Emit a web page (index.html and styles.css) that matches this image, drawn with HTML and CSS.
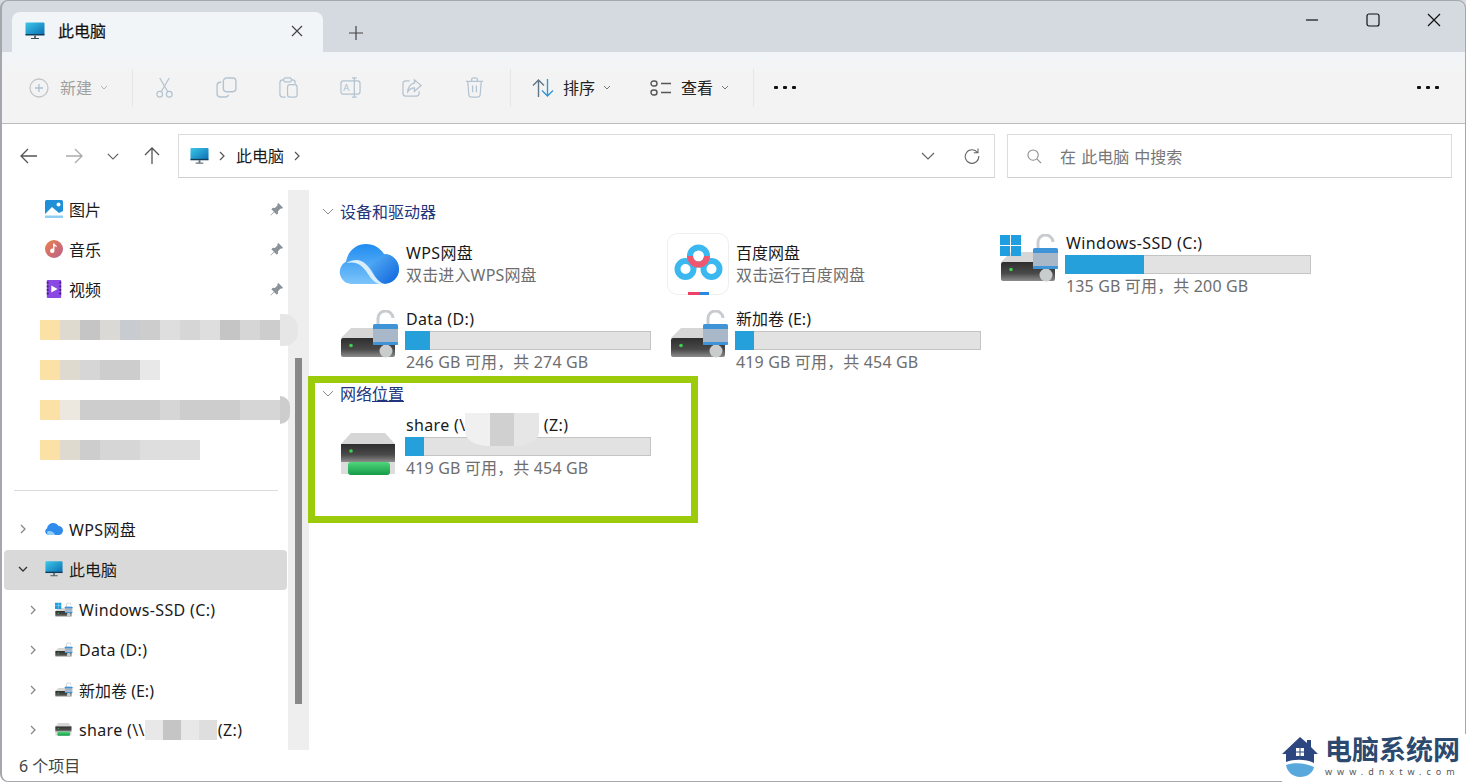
FILE: index.html
```html
<!DOCTYPE html>
<html lang="zh-CN">
<head>
    <meta charset="UTF-8">
    <title>此电脑</title>
    <link rel="stylesheet" href="styles.css">
</head>
<body>
<svg class="sprite" aria-hidden="true">
    <defs>
        <linearGradient id="g-screen" x1="0" y1="0" x2="1" y2="1"><stop offset="0" stop-color="#3cc8e8"/><stop offset="1" stop-color="#0b6db4"/></linearGradient>
        <linearGradient id="g-body" x1="0" y1="0" x2="0" y2="1"><stop offset="0" stop-color="#2e2e2e"/><stop offset="0.6" stop-color="#4a4a4a"/><stop offset="1" stop-color="#8c8c8c"/></linearGradient>
        <linearGradient id="g-cloud" x1="0" y1="0" x2="0" y2="1"><stop offset="0" stop-color="#1f8cf0"/><stop offset="1" stop-color="#7cc4fa"/></linearGradient>
        <linearGradient id="g-cloud2" x1="0" y1="0" x2="1" y2="1"><stop offset="0" stop-color="#5cb4f6"/><stop offset="1" stop-color="#0b62dc"/></linearGradient>
        <linearGradient id="g-music" x1="0" y1="0" x2="1" y2="1"><stop offset="0" stop-color="#ec8048"/><stop offset="1" stop-color="#b9608e"/></linearGradient>
        <linearGradient id="g-net" x1="0" y1="0" x2="0" y2="1"><stop offset="0" stop-color="#4fd77a"/><stop offset="1" stop-color="#159a48"/></linearGradient>
        <symbol id="i-monitor" viewBox="0 0 20 18">
            <rect x="0.5" y="0.5" width="19" height="12.5" rx="1" fill="url(#g-screen)"/>
            <rect x="0.5" y="12" width="19" height="1.5" fill="#123c58"/>
            <rect x="9" y="13.5" width="2" height="2.5" fill="#596c78"/>
            <rect x="6" y="16" width="8" height="1" fill="#3c4a52"/>
        </symbol>
        <symbol id="i-drive" viewBox="0 0 60 50">
            <path d="M1 28 L11 18 H45 L55 28 Z" fill="#d6d6d6"/>
            <rect x="1" y="28" width="54" height="19" rx="2" fill="url(#g-body)"/>
            <circle cx="11" cy="35.500" r="1.800" fill="#3fd04f"/>
            <path d="M38 15 V9 a7.500 7.500 0 0 1 15 -1" fill="none" stroke="#c8ccd0" stroke-width="3"/>
            <circle cx="46" cy="41" r="6.500" fill="#c9cccc"/>
            <rect x="33" y="14" width="25" height="21" rx="2" fill="#a8b8c8"/>
            <path d="M33 16 a2 2 0 0 1 2 -2 h21 a2 2 0 0 1 2 2 v3 h-25 Z" fill="#3f94d8"/>
            <rect x="33" y="32" width="25" height="3" rx="1" fill="#3f94d8"/>
        </symbol>
        <symbol id="i-drive-win" viewBox="0 0 60 50">
            <use href="#i-drive" width="60" height="50"/>
            <path d="M0 1 H10 V11 H0 Z M11 1 H21 V11 H11 Z M0 12 H10 V22 H0 Z M11 12 H21 V22 H11 Z" fill="#1f9ee0"/>
        </symbol>
        <symbol id="i-drive-net" viewBox="0 0 60 50">
            <path d="M1 13 L11 2 H45 L55 13 Z" fill="#d6d6d6"/>
            <rect x="1" y="13" width="54" height="18" fill="url(#g-body)"/>
            <circle cx="11" cy="20" r="1.800" fill="#3fd04f"/>
            <rect x="1" y="31" width="54" height="12" rx="1" fill="#dcdcdc"/>
            <rect x="8" y="31" width="42" height="13" rx="3" fill="url(#g-net)"/>
        </symbol>
        <symbol id="i-cloud" viewBox="0 0 60 40">
            <path d="M12 40 A12 12 0 0 1 7 17.500 C9 7 17 0 27 0 C35 0 41 4 45 10 A15 15 0 1 1 45 40 Z" fill="url(#g-cloud)"/>
            <path d="M45 10 A15 15 0 1 1 45 40 C38 40 36 30 30 22 C36 18 40 14 45 10 Z" fill="url(#g-cloud2)"/>
            <path d="M7 19 C20 12 27 18 33 28 C37 35 41 39 46 40 H40 C34 38 31 33 27 27 C22 20 16 17 7 19 Z" fill="#d8eefc"/>
        </symbol>
        <symbol id="i-baidu" viewBox="0 0 62 62">
            <rect x="0.500" y="0.500" width="61" height="61" rx="10" fill="#fff" stroke="#eeeeee"/>
            <circle cx="18.500" cy="36" r="8" fill="none" stroke="#3cb8f0" stroke-width="6"/>
            <circle cx="44.500" cy="36" r="8" fill="none" stroke="#3cb8f0" stroke-width="6"/>
            <circle cx="31.500" cy="23" r="8.500" fill="none" stroke="#3cb8f0" stroke-width="6"/>
            <path d="M23 23 A8.500 8.500 0 0 0 31.500 31.500 A8.500 8.500 0 0 0 40 23" fill="none" stroke="#f0566e" stroke-width="6"/>
            <rect x="21" y="59" width="11" height="3" fill="#f0406a"/>
            <rect x="32" y="59" width="10" height="3" fill="#2a88e0"/>
        </symbol>
        <symbol id="i-picture" viewBox="0 0 18 18">
            <rect width="18" height="18" rx="1.500" fill="#1f8fd8"/>
            <circle cx="13.500" cy="4.500" r="2" fill="#fff"/>
            <path d="M0 14 L7 7 L14 13 L18 11 V16 a2 2 0 0 1 -2 2 H2 a2 2 0 0 1 -2 -2 Z" fill="#fff"/>
            <path d="M0 15.500 H18 V16.500 a1.500 1.500 0 0 1 -1.500 1.500 H1.500 A1.500 1.500 0 0 1 0 16.500 Z" fill="#8fcdf2"/>
        </symbol>
        <symbol id="i-music" viewBox="0 0 20 20">
            <circle cx="10" cy="10" r="10" fill="url(#g-music)"/>
            <path d="M10.500 4 V12 a2.400 2.400 0 1 1 -1.500 -2.200 V4 Z M10.500 4 C11 6 13 6 13.500 8 C12.500 7.300 11.500 7 10.500 7 Z" fill="#fff"/>
        </symbol>
        <symbol id="i-video" viewBox="0 0 18 20">
            <rect x="1" y="0" width="16" height="20" rx="1" fill="#8a48e4"/>
            <path d="M1 2 H3 V4 H1 Z M1 6 H3 V8 H1 Z M1 10 H3 V12 H1 Z M1 14 H3 V16 H1 Z M15 2 H17 V4 H15 Z M15 6 H17 V8 H15 Z M15 10 H17 V12 H15 Z M15 14 H17 V16 H15 Z" fill="#3e1f78"/>
            <path d="M6 6 L13 10 L6 14 Z" fill="#fff"/>
        </symbol>
        <symbol id="i-wps-small" viewBox="0 0 60 40">
            <path d="M12 40 A12 12 0 0 1 7 17.500 C9 7 17 0 27 0 C35 0 41 4 45 10 A15 15 0 1 1 45 40 Z" fill="#2f8cec"/>
            <path d="M7 28 C20 24 28 30 34 40 H12 A12 12 0 0 1 7 28 Z" fill="#8fd0fa"/>
        </symbol>
        <symbol id="i-pin" viewBox="0 0 16 16">
            <path d="M10 1 L15 6 L13.600 7.200 L12.500 6.800 L9.500 9.800 L9.800 12 L8.300 13.500 L5.600 10.800 L2 14.500 L1.500 14 L5.200 10.400 L2.500 7.700 L4 6.200 L6.200 6.500 L9.200 3.500 L8.800 2.400 Z" fill="#8b9399"/>
        </symbol>
    </defs>
</svg>

<div class="window">
    <!-- title bar with tab -->
    <div class="titlebar">
        <div class="tab">
            <svg class="tab-icon"><use href="#i-monitor"/></svg>
            <span class="tab-title">此电脑</span>
            <svg class="tab-close" viewBox="0 0 12 12"><path d="M1 1 L11 11 M11 1 L1 11"/></svg>
        </div>
        <svg class="tab-add" viewBox="0 0 14 14"><path d="M7 0 V14 M0 7 H14"/></svg>
        <div class="win-controls">
            <button class="win-btn"><svg viewBox="0 0 14 14"><path d="M1 7 H13"/></svg></button>
            <button class="win-btn"><svg viewBox="0 0 14 14"><rect x="1" y="1" width="12" height="12" rx="2"/></svg></button>
            <button class="win-btn"><svg viewBox="0 0 14 14"><path d="M1 1 L13 13 M13 1 L1 13"/></svg></button>
        </div>
    </div>

    <!-- command bar -->
    <div class="toolbar">
        <svg class="tool-new" viewBox="0 0 20 20"><circle cx="10" cy="10" r="9"/><path d="M10 6 V14 M6 10 H14"/></svg>
        <span class="tool-label disabled">新建</span>
        <svg class="caret disabled-caret" viewBox="0 0 8 5"><path d="M1 1 L4 4 L7 1"/></svg>
        <span class="sep sep-first"></span>
        <button class="tool-btn"><svg viewBox="0 0 20 22"><circle cx="5" cy="18" r="3"/><circle cx="15" cy="18" r="3"/><path d="M6.500 15.500 L15 1 M13.500 15.500 L5 1"/></svg></button>
        <button class="tool-btn"><svg viewBox="0 0 20 20"><rect x="7" y="1" width="12" height="13" rx="3"/><path d="M5 5 H4 a3 3 0 0 0 -3 3 V16 a3 3 0 0 0 3 3 H9 a3 3 0 0 0 3 -2"/></svg></button>
        <button class="tool-btn"><svg viewBox="0 0 20 22"><path d="M5 3 H4 a3 3 0 0 0 -3 3 V18 a3 3 0 0 0 3 3 H7 M13 3 H14 a3 3 0 0 1 3 3 V7"/><rect x="5" y="1" width="8" height="4" rx="1.500"/><rect x="9" y="8" width="10" height="13" rx="2.500"/></svg></button>
        <button class="tool-btn"><svg viewBox="0 0 22 22"><rect x="1" y="4" width="20" height="14" rx="2.500"/><path d="M15 1 V21 M12.500 1 H17.500 M12.500 21 H17.500"/><text x="3.500" y="15" class="rename-a">A</text></svg></button>
        <button class="tool-btn"><svg viewBox="0 0 22 20"><path d="M8 3 H4 a3 3 0 0 0 -3 3 V16 a3 3 0 0 0 3 3 H15 a3 3 0 0 0 3 -3 V14"/><path d="M13 2 L20 8 L13 14 V10.500 C10 10.500 8 11.500 6 14.500 C6 10 9 6 13 5.500 Z"/></svg></button>
        <button class="tool-btn"><svg viewBox="0 0 20 22"><path d="M1 4.500 H19 M7 4 V3 a2 2 0 0 1 2 -2 H11 a2 2 0 0 1 2 2 V4 M3 5 L4 18 a3 3 0 0 0 3 3 H13 a3 3 0 0 0 3 -3 L17 5 M8 9 V16 M12 9 V16"/></svg></button>
        <span class="sep sep-second"></span>
        <svg class="tool-icon" viewBox="0 0 22 20"><path class="sort-up" d="M6.500 19 V2 M1 7.500 L6.500 2 L12 7.500"/><path class="sort-down" d="M15.500 1 V18 M10 12.500 L15.500 18 L21 12.500"/></svg>
        <span class="tool-label">排序</span>
        <svg class="caret" viewBox="0 0 8 5"><path d="M1 1 L4 4 L7 1"/></svg>
        <svg class="tool-icon view-icon" viewBox="0 0 22 16"><rect x="1" y="1" width="6" height="5" rx="2.500"/><rect x="1" y="10" width="6" height="5" rx="2.500"/><path d="M11 3.500 H21 M11 12.500 H21"/></svg>
        <span class="tool-label">查看</span>
        <svg class="caret" viewBox="0 0 8 5"><path d="M1 1 L4 4 L7 1"/></svg>
        <span class="sep sep-third"></span>
        <span class="dots"><i></i><i></i><i></i></span>
        <span class="dots dots-end"><i></i><i></i><i></i></span>
    </div>

    <!-- address row -->
    <div class="navbar">
        <button class="nav-btn"><svg viewBox="0 0 18 16"><path d="M17 8 H1 M8 1 L1 8 L8 15"/></svg></button>
        <button class="nav-btn nav-off"><svg viewBox="0 0 18 16"><path d="M1 8 H17 M10 1 L17 8 L10 15"/></svg></button>
        <button class="nav-btn"><svg class="nav-small" viewBox="0 0 14 8"><path d="M1 1 L7 7 L13 1"/></svg></button>
        <button class="nav-btn"><svg viewBox="0 0 16 18"><path d="M8 17 V1 M1 8 L8 1 L15 8"/></svg></button>
        <div class="address">
            <svg class="addr-icon"><use href="#i-monitor"/></svg>
            <svg class="addr-chev" viewBox="0 0 6 10"><path d="M1 1 L5 5 L1 9"/></svg>
            <span class="addr-text">此电脑</span>
            <svg class="addr-chev" viewBox="0 0 6 10"><path d="M1 1 L5 5 L1 9"/></svg>
            <svg class="addr-down" viewBox="0 0 14 8"><path d="M1 1 L7 7 L13 1"/></svg>
            <svg class="addr-refresh" viewBox="0 0 16 16"><path d="M13.500 4.500 A6.800 6.800 0 1 0 14.800 8 M14 0.500 V4.800 H9.800"/></svg>
        </div>
        <div class="search">
            <svg class="search-icon" viewBox="0 0 16 16"><circle cx="6.500" cy="6.500" r="5.500"/><path d="M10.500 10.500 L15 15"/></svg>
            <span>在 此电脑 中搜索</span>
        </div>
    </div>

    <div class="main">
        <nav class="sidebar">
            <div class="row row-pinned"><svg class="row-icon"><use href="#i-picture"/></svg><span>图片</span><svg class="pin"><use href="#i-pin"/></svg></div>
            <div class="row row-pinned"><svg class="row-icon"><use href="#i-music"/></svg><span>音乐</span><svg class="pin"><use href="#i-pin"/></svg></div>
            <div class="row row-pinned"><svg class="row-icon"><use href="#i-video"/></svg><span>视频</span><svg class="pin"><use href="#i-pin"/></svg></div>
            <div class="row row-pinned-blur">
                <div class="mosaic mosaic-long">
                    <i class="m-y"></i><i class="m-a"></i><i class="m-c"></i><i class="m-b"></i><i class="m-d"></i><i class="m-c2"></i><i class="m-e"></i><i class="m-b2"></i><i class="m-e"></i><i class="m-c"></i><i class="m-b2"></i><i class="m-c2"></i><i class="m-end"></i>
                </div>
            </div>
            <div class="row row-pinned-blur">
                <div class="mosaic">
                    <i class="m-y"></i><i class="m-a"></i><i class="m-b2"></i><i class="m-c2"></i><i class="m-c2"></i><i class="m-f"></i>
                </div>
            </div>
            <div class="row row-pinned-blur">
                <div class="mosaic mosaic-arrow">
                    <i class="m-y"></i><i class="m-g"></i><i class="m-c2"></i><i class="m-c2"></i><i class="m-c2"></i><i class="m-c2"></i><i class="m-b2"></i><i class="m-c2"></i><i class="m-c2"></i><i class="m-c2"></i><i class="m-b2"></i><i class="m-b2"></i><i class="m-tip"></i>
                </div>
            </div>
            <div class="row row-pinned-blur">
                <div class="mosaic">
                    <i class="m-y"></i><i class="m-a"></i><i class="m-c2"></i><i class="m-b2"></i><i class="m-b2"></i><i class="m-e"></i><i class="m-e"></i><i class="m-e"></i>
                </div>
            </div>
            <div class="side-divider"></div>
            <div class="row row-top"><svg class="chev" viewBox="0 0 6 10"><path d="M1 1 L5 5 L1 9"/></svg><svg class="row-icon"><use href="#i-wps-small"/></svg><span class="latin">WPS网盘</span></div>
            <div class="row row-top row-selected"><svg class="chev chev-open" viewBox="0 0 10 6"><path d="M1 1 L5 5 L9 1"/></svg><svg class="row-icon"><use href="#i-monitor"/></svg><span>此电脑</span></div>
            <div class="row row-sub"><svg class="chev" viewBox="0 0 6 10"><path d="M1 1 L5 5 L1 9"/></svg><svg class="row-icon"><use href="#i-drive-win"/></svg><span class="latin">Windows-SSD (C:)</span></div>
            <div class="row row-sub"><svg class="chev" viewBox="0 0 6 10"><path d="M1 1 L5 5 L1 9"/></svg><svg class="row-icon"><use href="#i-drive"/></svg><span class="latin">Data (D:)</span></div>
            <div class="row row-sub"><svg class="chev" viewBox="0 0 6 10"><path d="M1 1 L5 5 L1 9"/></svg><svg class="row-icon"><use href="#i-drive"/></svg><span>新加卷 (E:)</span></div>
            <div class="row row-sub"><svg class="chev" viewBox="0 0 6 10"><path d="M1 1 L5 5 L1 9"/></svg><svg class="row-icon"><use href="#i-drive-net"/></svg><span class="latin">share (\\</span><span class="mosaic mosaic-inline"><i class="m-f"></i><i class="m-c"></i><i class="m-f"></i><i class="m-e"></i></span><span class="latin">(Z:)</span></div>
        </nav>
        <div class="scroll-track"><div class="scroll-thumb"></div></div>

        <div class="content">
            <section class="group">
                <h3 class="group-title"><svg viewBox="0 0 12 7"><path d="M1 1 L6 6 L11 1"/></svg>设备和驱动器</h3>
                <div class="grid">
                    <div class="item">
                        <svg class="item-cloud"><use href="#i-cloud"/></svg>
                        <div class="item-text"><div class="name name-plain latin">WPS网盘</div><div class="info">双击进入WPS网盘</div></div>
                    </div>
                    <div class="item">
                        <svg class="item-tile"><use href="#i-baidu"/></svg>
                        <div class="item-text"><div class="name name-plain">百度网盘</div><div class="info">双击运行百度网盘</div></div>
                    </div>
                    <div class="item">
                        <svg class="item-drive"><use href="#i-drive-win"/></svg>
                        <div class="item-text">
                            <div class="name latin">Windows-SSD (C:)</div>
                            <div class="bar"><div class="bar-used" style="width: 32.5%"></div></div>
                            <div class="info">135 GB 可用，共 200 GB</div>
                        </div>
                    </div>
                    <div class="item">
                        <svg class="item-drive"><use href="#i-drive"/></svg>
                        <div class="item-text">
                            <div class="name latin">Data (D:)</div>
                            <div class="bar"><div class="bar-used" style="width: 10.2%"></div></div>
                            <div class="info">246 GB 可用，共 274 GB</div>
                        </div>
                    </div>
                    <div class="item">
                        <svg class="item-drive"><use href="#i-drive"/></svg>
                        <div class="item-text">
                            <div class="name">新加卷 (E:)</div>
                            <div class="bar"><div class="bar-used" style="width: 7.7%"></div></div>
                            <div class="info">419 GB 可用，共 454 GB</div>
                        </div>
                    </div>
                </div>
            </section>
            <section class="group group-net">
                <h3 class="group-title"><svg viewBox="0 0 12 7"><path d="M1 1 L6 6 L11 1"/></svg>网络<u>位置</u></h3>
                <div class="grid">
                    <div class="item">
                        <svg class="item-drive item-drive-net"><use href="#i-drive-net"/></svg>
                        <div class="item-text">
                            <div class="name latin">share (\\<span class="name-gap"></span>(Z:)</div>
                            <div class="bar"><div class="bar-used" style="width: 7.7%"></div></div>
                            <div class="info">419 GB 可用，共 454 GB</div>
                            <div class="name-blur"><i></i><i></i><i></i></div>
                        </div>
                    </div>
                </div>
            </section>
            <div class="highlight"></div>
        </div>
    </div>

    <div class="statusbar">6 个项目</div>

    <div class="watermark">
        <svg class="wm-logo" viewBox="0 0 36 40">
            <path d="M18 0 L25 6 V3 H29 V10 L36 17 H32 V26 C24 22 12 22 4 25 V17 H0 Z" fill="#2c4680"/>
            <path d="M14 11 H22 V19 H14 Z" fill="#fff"/>
            <path d="M17.500 11 H18.500 V19 H17.500 Z M14 14.500 H22 V15.500 H14 Z" fill="#2c4680"/>
            <path d="M4 28 C12 25 24 26 32 30 C31 36 25 40 18 40 C11 40 5 35 4 28 Z" fill="#58a8dc"/>
        </svg>
        <div class="wm-text">
            <div class="wm-title">电脑系统网</div>
            <div class="wm-url">www.dnxtw.com</div>
        </div>
    </div>
</div>
</body>
</html>
```
FILE: styles.css
```css
* {
    box-sizing: border-box;
}

body {
    margin: 0;
    background-color: #fff;
    font-family: "Noto Sans", "Noto Sans CJK SC", sans-serif;
    font-size: 16px;
    color: #1a1a1a;
    overflow: hidden;
}

button {
    background: none;
    border: none;
    padding: 0;
    font: inherit;
}

svg {
    display: block;
    flex: none;
}

.sprite {
    position: absolute;
    width: 0;
    height: 0;
}

.latin {
    letter-spacing: 0.35px;
}

.window {
    position: relative;
    width: 1466px;
    height: 782px;
    display: flex;
    flex-direction: column;
    overflow: hidden;
    background-color: #fff;
}

/* thin window outline drawn above everything */
.window::after {
    content: "";
    position: absolute;
    inset: 0;
    border: 1px solid #a4a7ab;
    border-left-width: 2px;
    border-radius: 8px;
    pointer-events: none;
}

/* title bar */
.titlebar {
    height: 52px;
    flex: none;
    display: flex;
    align-items: flex-end;
    padding-left: 12px;
    background-color: #d5d9e0;
}

.tab {
    width: 311px;
    height: 40px;
    display: flex;
    align-items: center;
    padding-left: 13px;
    padding-bottom: 2px;
    background-color: #f2f5f7;
    border-radius: 8px 8px 0 0;
}

.tab-icon {
    width: 20px;
    height: 18px;
}

.tab-title {
    margin-left: 13px;
    padding-bottom: 2px;
    color: #111;
    -webkit-text-stroke: 0.2px #111;
}

.tab-close {
    width: 12px;
    height: 12px;
    margin-left: auto;
    margin-right: 20px;
    fill: none;
    stroke: #444;
    stroke-width: 1.2;
}

.tab-add {
    width: 14px;
    height: 14px;
    margin-left: 26px;
    margin-bottom: 12px;
    fill: none;
    stroke: #444;
    stroke-width: 1.2;
}

.win-controls {
    display: flex;
    margin-left: auto;
    align-self: flex-start;
    margin-right: 2px;
}

.win-btn {
    width: 61px;
    height: 40px;
    display: flex;
    align-items: center;
    justify-content: center;
}

.win-btn svg {
    width: 14px;
    height: 14px;
    fill: none;
    stroke: #111;
    stroke-width: 1.2;
}

/* command bar */
.toolbar {
    height: 72px;
    flex: none;
    display: flex;
    align-items: center;
    padding-left: 29px;
    background: linear-gradient(#f1f5f8, #f3f3f3 30%);
    border-bottom: 1px solid #bcbcbc;
}

.tool-new {
    width: 20px;
    height: 20px;
    fill: none;
    stroke: #c2c6ca;
    stroke-width: 1.300;
}

.tool-new path {
    stroke: #a9c0d4;
}

.tool-label {
    margin-left: 9px;
    padding-bottom: 1px;
    color: #222;
}

.tool-label.disabled {
    margin-left: 11px;
    color: #a0a0a0;
}

.caret {
    width: 8px;
    height: 5px;
    margin-left: 8px;
    fill: none;
    stroke: #777;
    stroke-width: 1;
}

.disabled-caret {
    stroke: #b4b4b4;
}

.sep {
    width: 1px;
    height: 38px;
    background-color: #e6e6e6;
}

.sep-first {
    margin-left: 24px;
}

.sep-second {
    margin-left: 5px;
}

.sep-third {
    margin-left: 24px;
}

.tool-btn {
    width: 62px;
    height: 40px;
    display: flex;
    align-items: center;
    justify-content: center;
}

.tool-btn svg {
    width: 21px;
    height: 21px;
    fill: none;
    stroke: #b4c3d1;
    stroke-width: 1.300;
}

.rename-a {
    font-family: "Noto Sans", sans-serif;
    font-size: 10px;
    fill: #a9c0d4;
    stroke: none;
}

.tool-icon {
    width: 22px;
    height: 20px;
    margin-left: 21px;
    fill: none;
    stroke-width: 1.400;
}

.sort-up {
    stroke: #5f7686;
}

.sort-down {
    stroke: #3596d8;
}

.view-icon {
    height: 16px;
    margin-left: 39px;
    stroke: #555;
}

.dots {
    display: flex;
    gap: 5px;
    margin-left: 20px;
}

.dots i {
    width: 4px;
    height: 3px;
    background-color: #111;
    border-radius: 1px;
}

.dots-end {
    margin-left: auto;
    margin-right: 27px;
}

/* address row */
.navbar {
    height: 66px;
    flex: none;
    display: flex;
    align-items: center;
    padding-left: 9px;
    padding-bottom: 2px;
}

.nav-btn {
    width: 39px;
    height: 30px;
    display: flex;
    align-items: center;
    justify-content: center;
}

.nav-btn svg {
    width: 18px;
    height: 18px;
    fill: none;
    stroke: #555;
    stroke-width: 1.300;
}

.nav-btn svg.nav-small {
    width: 12px;
    height: 7px;
}

.nav-off {
    margin-left: 6px;
}

.nav-off svg {
    stroke: #aaa;
}

.address {
    width: 817px;
    height: 44px;
    margin-left: 7px;
    display: flex;
    align-items: center;
    padding-left: 11px;
    border: 1px solid #dcdcdc;
    border-bottom-color: #cfcfcf;
}

.addr-icon {
    width: 19px;
    height: 18px;
    margin-bottom: 1px;
}

.addr-chev {
    width: 6px;
    height: 10px;
    margin-left: 10px;
    fill: none;
    stroke: #555;
    stroke-width: 1.200;
}

.addr-text {
    margin-left: 11px;
    padding-bottom: 3px;
}

.addr-down {
    width: 14px;
    height: 8px;
    margin-left: auto;
    fill: none;
    stroke: #666;
    stroke-width: 1.200;
}

.addr-refresh {
    width: 16px;
    height: 16px;
    margin-left: 29px;
    margin-right: 14px;
    fill: none;
    stroke: #666;
    stroke-width: 1.100;
}

.search {
    width: 445px;
    height: 44px;
    margin-left: 12px;
    display: flex;
    align-items: center;
    padding-left: 19px;
    gap: 18px;
    border: 1px solid #dcdcdc;
    border-bottom-color: #cfcfcf;
    word-spacing: 1px;
    color: #777;
}

.search-icon {
    width: 15px;
    height: 15px;
    fill: none;
    stroke: #888;
    stroke-width: 1.100;
}

/* main area */
.main {
    flex: 1;
    display: flex;
    min-height: 0;
}

.sidebar {
    width: 288px;
    flex: none;
    position: relative;
    z-index: 1;
}

.row {
    height: 40px;
    display: flex;
    align-items: center;
    padding-bottom: 2px;
    white-space: nowrap;
}

.row-pinned {
    padding-left: 45px;
}

.row-pinned-blur {
    padding-left: 40px;
    padding-bottom: 0;
}

.row-top {
    padding-left: 18px;
}

.row-selected {
    margin: 0 1px 0 4px;
    padding-left: 14px;
    background-color: #d9d9d9;
    border-radius: 4px;
}

.row-sub {
    padding-left: 28px;
    padding-bottom: 0;
}

.row-icon {
    width: 18px;
    height: 18px;
    margin-right: 6px;
}

.pin {
    width: 15px;
    height: 15px;
    margin-left: auto;
    margin-right: 4px;
}

.chev {
    width: 6px;
    height: 10px;
    margin-left: 2px;
    margin-right: 19px;
    fill: none;
    stroke: #888;
    stroke-width: 1.300;
}

.chev-open {
    width: 10px;
    height: 6px;
    margin-left: 0;
    margin-right: 17px;
    stroke: #333;
}

.side-divider {
    height: 1px;
    margin: 20px 10px 19px 14px;
    background-color: #dcdcdc;
}

/* blurred names */
.mosaic {
    display: flex;
    height: 20px;
    position: relative;
}

.mosaic i {
    width: 20px;
    height: 20px;
    display: block;
}

.mosaic-inline {
    margin-right: 1px;
}

.mosaic-inline i {
    width: 18px;
}

.m-y { background-color: #fbe1a6; }
.m-a { background-color: #dfdad0; }
.m-b { background-color: #dbd9d5; }
.m-b2 { background-color: #d6d6d6; }
.m-c { background-color: #c5c5c5; }
.m-c2 { background-color: #cdcdcd; }
.m-d { background-color: #c8ccd0; }
.m-e { background-color: #dedede; }
.m-f { background-color: #e8e8e8; }
.m-g { background-color: #ece8df; }

.mosaic .m-end {
    width: 18px;
    height: 32px;
    margin-top: -6px;
    background-color: #e6e6e6;
    border-radius: 0 14px 14px 0;
}

.mosaic .m-tip {
    width: 10px;
    height: 28px;
    margin-top: -4px;
    background-color: #cdcdcd;
    border-radius: 0 14px 14px 0;
}

/* scrollbar */
.scroll-track {
    width: 21px;
    height: 560px;
    flex: none;
    padding: 168px 0 0 7px;
    background-color: #eeeeee;
}

.scroll-thumb {
    width: 7px;
    height: 346px;
    background-color: #888;
}

/* file list */
.content {
    flex: 1;
    position: relative;
    padding: 8px 0 0 21px;
    background-color: #fff;
}

.group-net {
    margin-top: 2px;
}

.group-title {
    height: 28px;
    margin: 0 0 0 -8px;
    padding-bottom: 2px;
    display: flex;
    align-items: center;
    font-size: 16px;
    font-weight: normal;
    color: #22357c;
}

.group-title svg {
    width: 12px;
    height: 7px;
    margin-right: 6px;
    fill: none;
    stroke: #8a8a8a;
    stroke-width: 1;
}

.group-title u {
    text-decoration-color: #22357c;
}

.grid {
    display: grid;
    grid-template-columns: repeat(3, 330px);
    grid-auto-rows: 76px;
}

.item {
    display: flex;
    align-items: center;
    padding-left: 10px;
}

.item-cloud {
    width: 60px;
    height: 40px;
    margin-left: -1px;
    margin-right: 6px;
}

.item-tile {
    width: 62px;
    height: 62px;
    margin-left: -3px;
    margin-right: 6px;
}

.item-drive {
    width: 60px;
    height: 50px;
    margin-right: 5px;
    margin-bottom: 10px;
}

.item-drive-net {
    margin-top: 20px;
    margin-bottom: 0;
}

.item-text {
    width: 246px;
    position: relative;
}

.name {
    height: 22px;
    line-height: 20px;
    padding-left: 1px;
    white-space: nowrap;
}

.name-plain {
    line-height: 22px;
}

.info {
    height: 22px;
    line-height: 22px;
    padding-left: 1px;
    letter-spacing: 0.15px;
    color: #6e6e6e;
    white-space: nowrap;
}

.bar + .info {
    line-height: 24px;
}

.bar {
    height: 19px;
    background-color: #e2e2e2;
    border: 1px solid #c4c4c4;
}

.bar-used {
    height: 100%;
    margin: -1px 0 0 -1px;
    box-sizing: content-box;
    padding-bottom: 2px;
    background-color: #26a0da;
}

.name-gap {
    display: inline-block;
    width: 72px;
}

.name-blur {
    position: absolute;
    left: 60px;
    top: -2px;
    width: 74px;
    height: 33px;
    display: flex;
    overflow: hidden;
    border-radius: 0 0 24px 24px / 0 0 14px 14px;
}

.name-blur i {
    flex: 1;
    background-color: #f0f0f0;
}

.name-blur i:nth-child(2) {
    background-color: #d0d0d0;
}

.name-blur i:nth-child(3) {
    background-color: #e6e6e6;
}

.highlight {
    position: absolute;
    left: -1px;
    top: 186px;
    width: 390px;
    height: 147px;
    border: 7px solid #9bcb0a;
}

.statusbar {
    height: 30px;
    flex: none;
    display: flex;
    align-items: center;
    padding-left: 19px;
    padding-bottom: 5px;
    color: #444;
}

/* site watermark */
.watermark {
    position: absolute;
    right: 0;
    bottom: 0;
    width: 184px;
    height: 48px;
    display: flex;
    align-items: flex-start;
    gap: 7px;
    background-color: #fff;
    z-index: 2;
}

.wm-logo {
    width: 36px;
    height: 40px;
    margin-top: 3px;
}

.wm-title {
    height: 32px;
    line-height: 32px;
    font-size: 27px;
    font-weight: bold;
    color: #2c4a70;
    white-space: nowrap;
}

.wm-url {
    font-size: 9px;
    line-height: 12px;
    letter-spacing: 5px;
    color: #555;
    white-space: nowrap;
}
```
